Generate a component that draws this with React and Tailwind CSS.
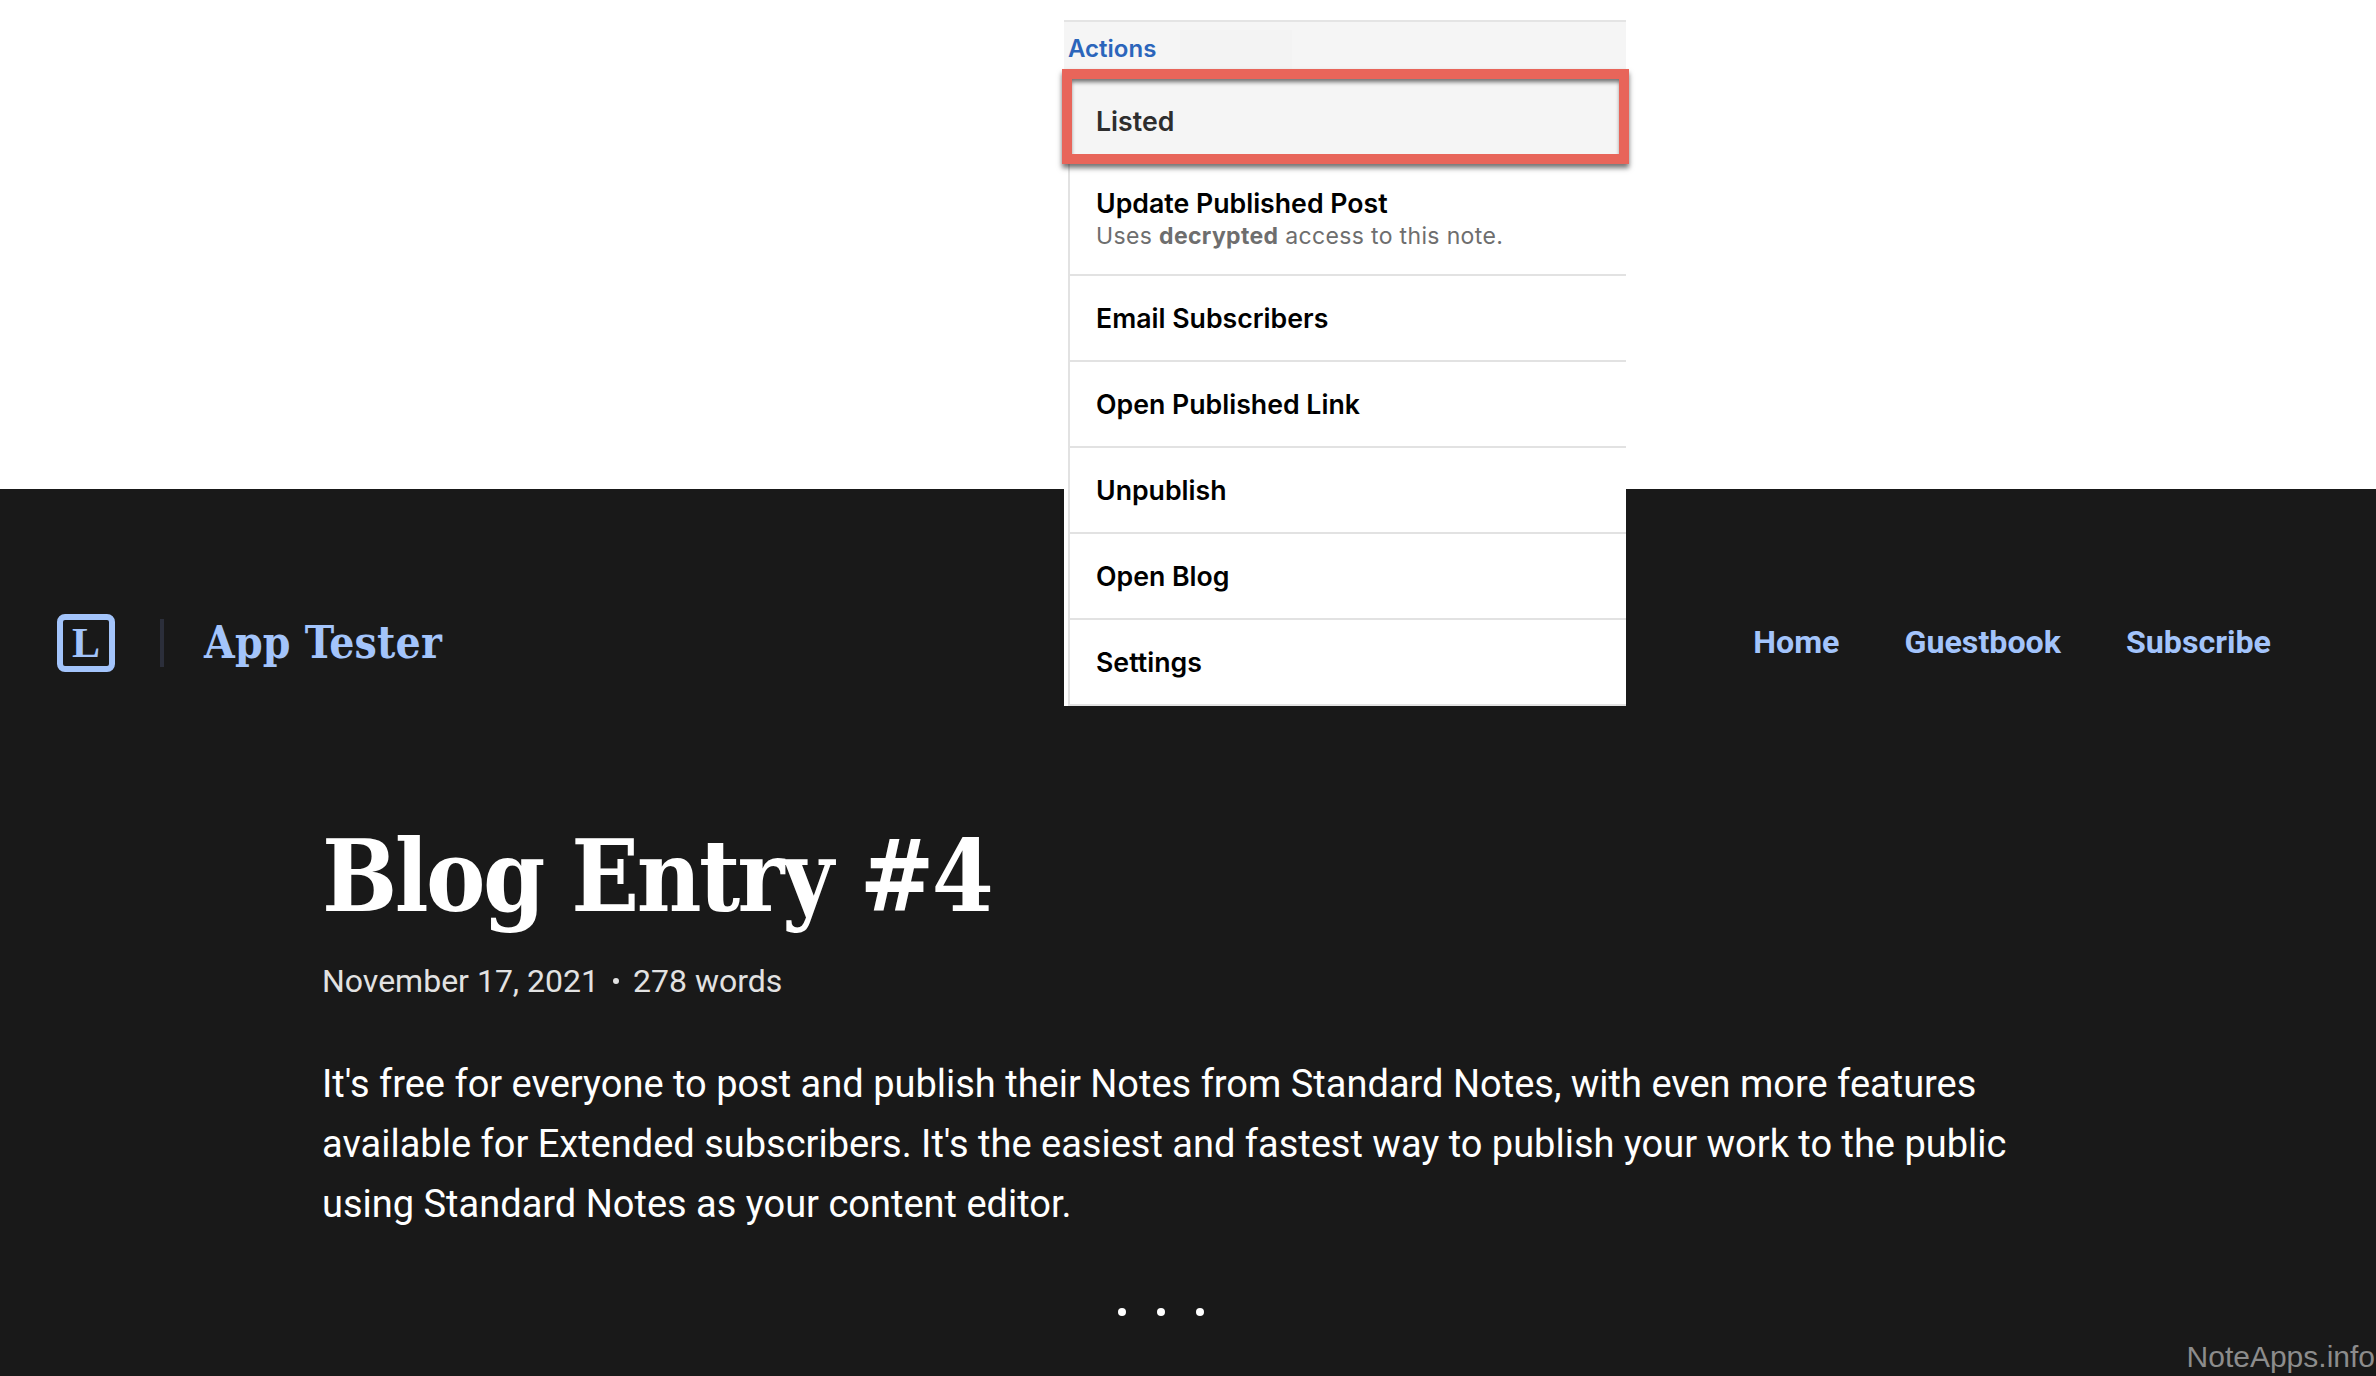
const menuRows = ["Email Subscribers", "Open Published Link", "Unpublish", "Open Blog", "Settings"];
const inter = "font-['Inter',sans-serif]";
const roboto = "font-['Roboto',sans-serif]";
const serif = "font-['DejaVu_Serif',serif] [font-stretch:condensed]";

function ActionsPanel() {
  return (
    <div className={`absolute left-[1064px] top-[20px] w-[562px] bg-white ${inter}`}>
      <div className="relative h-[50px] border-t-2 border-[#e4e4e4] bg-[#f5f5f5] pl-[4px] pt-[11px] text-[24px] leading-[32px] font-semibold text-[#2b65bb]">
        Actions
        <div className="absolute left-[116px] top-[8px] h-[40px] w-[112px] bg-[#f3f3f3]" />
      </div>
      <div className="ml-[4px] border-l-2 border-[#e2e2e2]">
        <div className="relative z-10 -mt-px -ml-[8px] -mr-[3px] h-[95px] border-[10px] border-[#e8655a] bg-[#f5f5f5] pl-[24px] pt-[24px] text-[26.7px] leading-[36px] font-semibold text-[#2e2e2e] shadow-[0_4px_5px_rgba(0,0,0,0.55),inset_0_4px_4px_-1px_rgba(0,0,0,0.55)]">
          Listed
        </div>
        <div className="h-[112px] border-b-2 border-[#e2e2e2] pl-[26px] pt-[21px]">
          <div className="text-[26.7px] leading-[36px] font-semibold text-black">Update Published Post</div>
          <div className="text-[23px] leading-[30px] tracking-[0.35px] text-[#6e6e6e]">
            Uses <span className="font-bold">decrypted</span> access to this note.
          </div>
        </div>
        {menuRows.map((label) => (
          <div
            key={label}
            className="flex h-[86px] items-center border-b-[2px] border-[#e2e2e2] pl-[26px] text-[26.7px] font-semibold text-black"
          >
            {label}
          </div>
        ))}
      </div>
    </div>
  );
}

function Brand() {
  return (
    <div className="flex items-center">
      <div className="flex h-[58px] w-[58px] items-center justify-center rounded-[8px] border-[6px] border-[#a3c4fb] font-['Liberation_Serif',serif] text-[42px] leading-none font-bold text-[#a3c4fb]">
        L
      </div>
      <div className="ml-[45px] h-[48px] w-[4px] bg-[#2b2e3a]" />
      <div className={`ml-[40px] text-[44px] leading-[60px] font-bold tracking-[0.2px] text-[#a3c4fb] ${serif}`}>App Tester</div>
    </div>
  );
}

export default function App() {
  return (
    <div className="relative h-[1376px] w-[2376px] overflow-hidden bg-white">
      <div className="h-[489px]" />
      <ActionsPanel />
      <div className="flex h-[887px] flex-col bg-[#191919]">
        <div className="flex items-center justify-between pl-[57px] pr-[105px] pt-[124px]">
          <Brand />
          <nav className={`-mt-[2px] flex gap-[65px] text-[32.2px] leading-[40px] font-bold text-[#a3c4fb] ${roboto}`}>
            <span>Home</span>
            <span>Guestbook</span>
            <span>Subscribe</span>
          </nav>
        </div>
        <article className="relative flex-1 pl-[322px]">
          <h1 className={`mt-[138px] text-[99px] leading-[130px] font-bold tracking-[-2.5px] text-white ${serif}`}>Blog Entry #4</h1>
          <div className={`mt-[18px] flex items-center gap-[14px] text-[32px] leading-[44px] text-[#e2e2e2] ${roboto}`}>
            <span>November 17, 2021</span>
            <span className="h-[6px] w-[6px] rounded-full bg-[#e2e2e2]" />
            <span>278 words</span>
          </div>
          <p className={`mt-[51px] w-[1720px] text-[38px] leading-[60px] text-white ${roboto}`}>
            It's free for everyone to post and publish their Notes from Standard Notes, with even more features
            available for Extended subscribers. It's the easiest and fastest way to publish your work to the public
            using Standard Notes as your content editor.
          </p>
          <div className="mt-[74px] ml-[796px] flex gap-[31px]">
            <span className="h-[8px] w-[8px] rounded-full bg-white" />
            <span className="h-[8px] w-[8px] rounded-full bg-white" />
            <span className="h-[8px] w-[8px] rounded-full bg-white" />
          </div>
          <div className="absolute bottom-[1px] right-[1px] font-['Liberation_Sans',sans-serif] text-[30px] leading-[36px] text-[#8c8c8c]">
            NoteApps.info
          </div>
        </article>
      </div>
    </div>
  );
}
